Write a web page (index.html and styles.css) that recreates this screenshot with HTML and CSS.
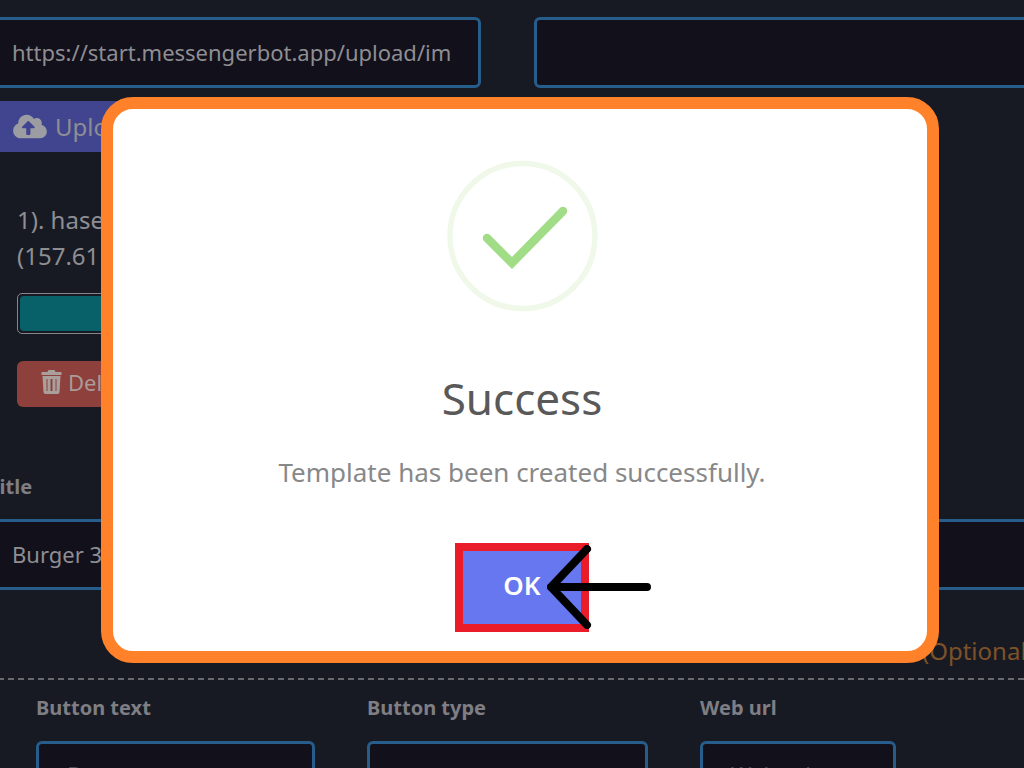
FILE: index.html
```html
<!DOCTYPE html>
<html lang="en">
<head>
<meta charset="utf-8">
<meta name="viewport" content="width=device-width, initial-scale=1">
<title>Template created</title>
<link rel="stylesheet" href="styles.css">
</head>
<body>
<main class="page">
  <div class="media-row">
    <input class="field" type="text" aria-label="Image URL" value="https://start.messengerbot.app/upload/im">
    <input class="field" type="text" aria-label="Destination URL">
  </div>
  <button class="upload" type="button">
    <svg class="cloud" viewBox="0 0 640 512" aria-hidden="true"><path d="M537.6 226.6c4.100-10.700 6.400-22.400 6.400-34.600 0-53-43-96-96-96-19.700 0-38.100 6-53.300 16.200C367 64.200 315.300 32 256 32c-88.400 0-160 71.600-160 160 0 2.700.1 5.400.2 8.100C40.200 219.800 0 273.200 0 336c0 79.500 64.500 144 144 144h368c70.700 0 128-57.300 128-128 0-61.900-44-113.600-102.400-125.400zM393.400 288H328v112c0 8.800-7.200 16-16 16h-48c-8.800 0-16-7.200-16-16V288h-65.400c-14.300 0-21.400-17.200-11.300-27.300l105.400-105.400c6.200-6.200 16.400-6.200 22.600 0l105.400 105.400c10.100 10.100 2.900 27.300-11.300 27.300z"/></svg>
    <span>Upload</span>
  </button>
  <section class="file">
    <p class="file-name">1). hasegawa.jpg<br>(157.61 KB)</p>
    <div class="progress"><div class="bar"></div></div>
    <button class="delete" type="button">
      <svg class="trash" viewBox="0 0 20 24" aria-hidden="true"><path fill-rule="evenodd" d="M7 0h6l1 2h6v3H0V2h6zM1 6h18l-1 16a2 2 0 0 1-2 2H4a2 2 0 0 1-2-2zM5 9v12h1V9zM9 9v12h2V9zM14 9v12h1V9z"/></svg>
      <span>Delete</span>
    </button>
  </section>
  <div class="title-group">
    <label class="label" for="title">Title</label>
    <input class="field" id="title" type="text" value="Burger 3">
  </div>
  <p class="optional">(Optional)</p>
  <section class="buttons">
    <div class="group">
      <label class="label" for="btext">Button text</label>
      <input class="field" id="btext" type="text" placeholder="Button text">
    </div>
    <div class="group">
      <label class="label" for="btype">Button type</label>
      <select class="field" id="btype"><option></option></select>
    </div>
    <div class="group">
      <label class="label" for="burl">Web url</label>
      <input class="field" id="burl" type="text" placeholder="Web url">
    </div>
  </section>
</main>
<div class="overlay">
  <div class="dialog" role="dialog" aria-modal="true" aria-labelledby="dtitle" aria-describedby="dtext">
    <svg class="success" viewBox="0 0 152 152" aria-hidden="true">
      <circle cx="76.500" cy="76" r="72.500" fill="none" stroke="#eff8e9" stroke-width="5.500"/>
      <path d="M41 78 66 103 117 51" fill="none" stroke="#a1dc86" stroke-width="8.500" stroke-linecap="round"/>
    </svg>
    <h1 class="dialog-title" id="dtitle">Success</h1>
    <p class="dialog-text" id="dtext">Template has been created successfully.</p>
    <div class="action">
      <button class="ok" type="button">OK</button>
      <svg class="arrow" viewBox="0 0 104 84" aria-hidden="true"><path d="M100 42H4L40 4M4 42 40 80" fill="none" stroke="#000" stroke-width="8" stroke-linecap="round" stroke-linejoin="round"/></svg>
    </div>
  </div>
</div>
</body>
</html>
```
FILE: styles.css
```css
* { box-sizing: border-box; }
body {
  margin: 0;
  height: 100vh;
  overflow: hidden;
  background: #181a23;
  color: #8e8e93;
  font-family: "Noto Sans", "Open Sans", sans-serif;
  font-size: 22px;
}
button, input, select { font: inherit; color: inherit; }
p, h1 { margin: 0; }
.page { padding-top: 17px; margin: 0 -20px 0 -12px; }
.field {
  display: block;
  width: 100%;
  height: 71px;
  padding: 0 21px 2px;
  border: 3px solid #265d8b;
  border-radius: 6px;
  background: #12101a;
}
.field::placeholder { color: #4c4c54; opacity: 1; }
select.field { appearance: none; }
.media-row { display: grid; grid-template-columns: 493fr 510fr; gap: 53px; }
.upload {
  display: flex;
  align-items: center;
  gap: 8px;
  width: 493px;
  height: 51px;
  margin-top: 13px;
  padding: 0 25px;
  border: 0;
  background: #41458f;
  font-size: 24px;
}
.cloud { width: 34px; height: 27px; fill: #9c9ca3; }
.file { width: 493px; padding: 50px 24px 0 29px; }
.file-name { font-size: 24px; line-height: 36px; }
.progress {
  height: 41px;
  margin-top: 19px;
  padding: 2px;
  border: 1px solid #85858b;
  border-radius: 5px;
}
.bar { height: 100%; border-radius: 4px; background: #086069; }
.delete {
  display: flex;
  align-items: center;
  gap: 6px;
  height: 46px;
  margin-top: 27px;
  padding: 0 24px 4px;
  border: 0;
  border-radius: 6px;
  background: #8d403c;
  color: #a99b9a;
}
.trash { width: 21px; height: 24px; fill: #aaa09b; }
.label { display: block; font-size: 20px; font-weight: 700; line-height: 28px; color: #7e7e84; }
.title-group { margin-top: 66px; }
.title-group .label { margin-bottom: 18px; }
.optional { padding: 0 0 0 934px; margin-top: 45px; font-size: 24px; line-height: 32px; color: #7d5229; }
.buttons {
  display: grid;
  grid-template-columns: 279fr 281fr 196fr 96fr;
  gap: 52px;
  margin-top: 11px;
  padding: 14px 0 0 48px;
  border-top: 2px dashed #68686f;
}
.group .label { margin-bottom: 19px; }
.group .field { height: 68px; padding: 0 28px 2px; }
.overlay { position: fixed; inset: 0; display: flex; padding: 97px 85px 105px 101px; }
.dialog {
  flex: 1;
  display: flex;
  flex-direction: column;
  align-items: center;
  padding: 51px 24px 0 28px;
  border: 12px solid #ff822a;
  border-radius: 32px;
  background: #fff;
}
.success { width: 152px; height: 152px; }
.dialog-title { margin-top: 58px; font-size: 44px; font-weight: 400; line-height: 56px; color: #595959; }
.dialog-text { margin-top: 28px; font-size: 26px; line-height: 36px; color: #888; }
.action { position: relative; margin-top: 53px; }
.ok {
  display: block;
  width: 134px;
  height: 89px;
  padding: 0 0 6px;
  border: 8px solid #eb1c2a;
  background: #6777ef;
  color: #fff;
  font-size: 26px;
  font-weight: 600;
}
.arrow { position: absolute; left: 92px; top: 2px; width: 104px; height: 84px; }
```
